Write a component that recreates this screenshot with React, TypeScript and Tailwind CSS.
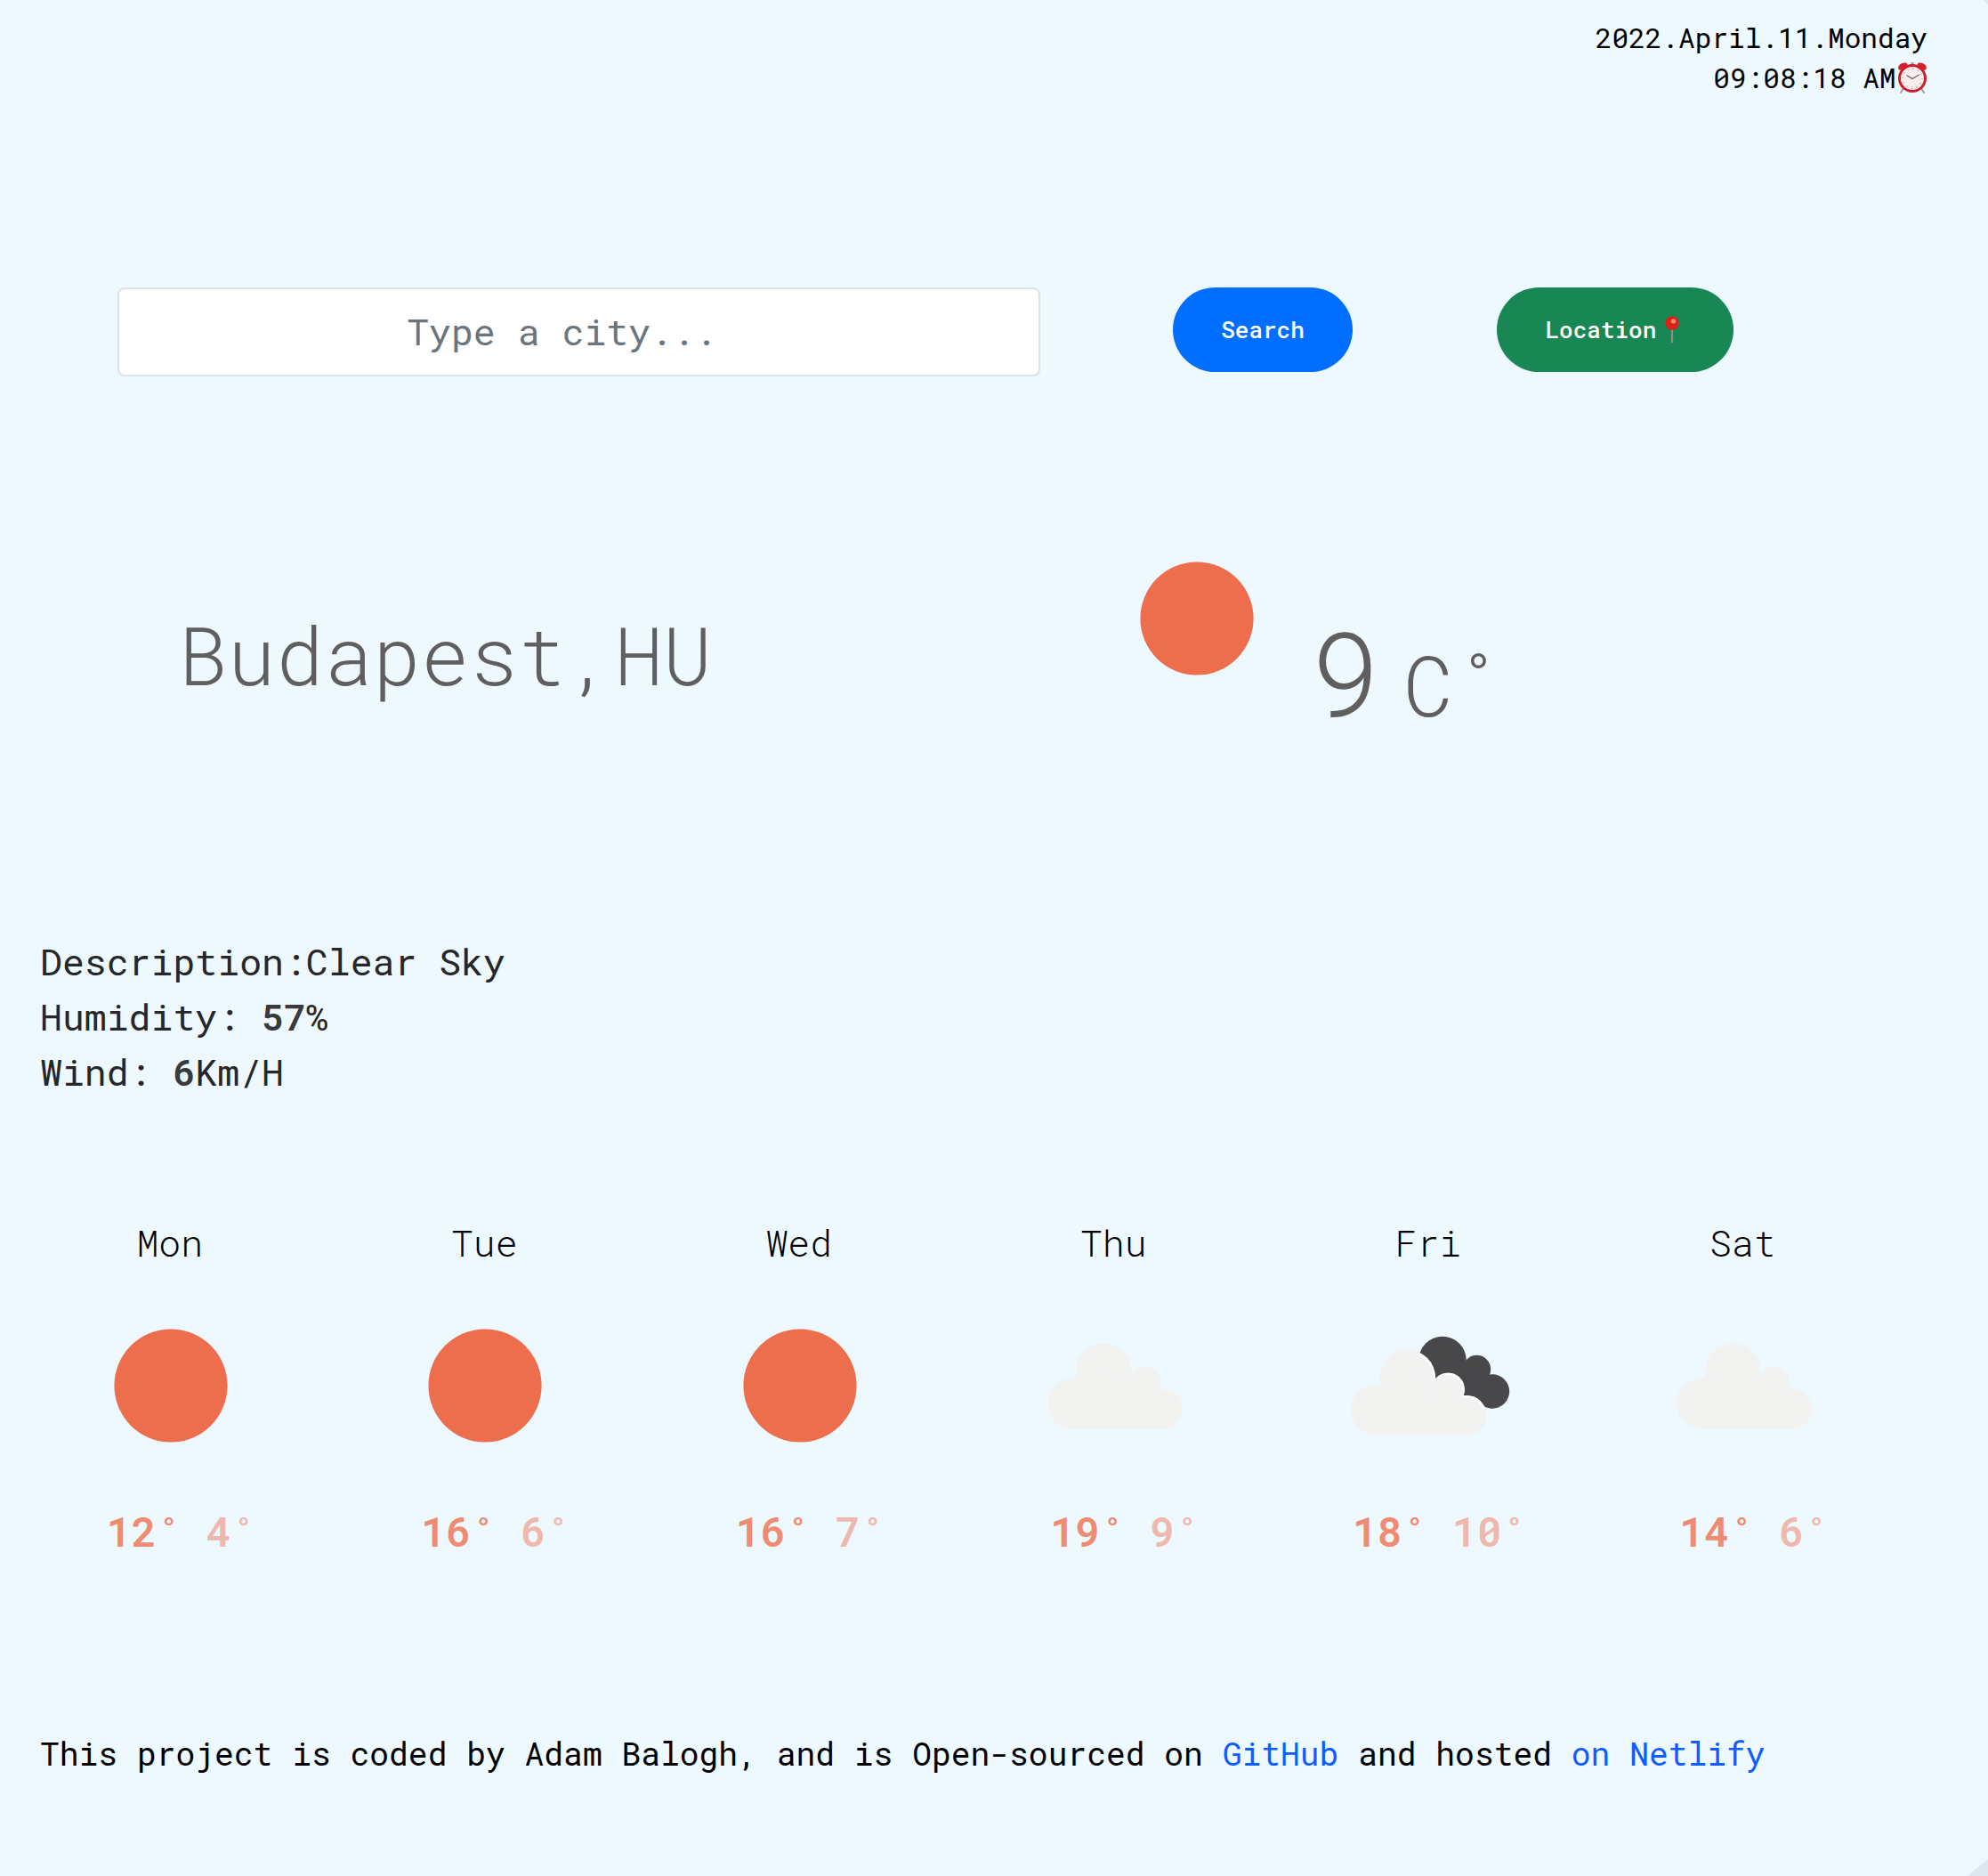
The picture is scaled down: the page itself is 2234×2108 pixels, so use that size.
import React from "react";

type Sky = "clear" | "cloudy" | "broken";

type Day = { name: string; sky: Sky; max: number; min: number };

const days: Day[] = [
  { name: "Mon", sky: "clear", max: 12, min: 4 },
  { name: "Tue", sky: "clear", max: 16, min: 6 },
  { name: "Wed", sky: "clear", max: 16, min: 7 },
  { name: "Thu", sky: "cloudy", max: 19, min: 9 },
  { name: "Fri", sky: "broken", max: 18, min: 10 },
  { name: "Sat", sky: "cloudy", max: 14, min: 6 },
];

function CloudShape() {
  return (
    <>
      <circle cx="88.3" cy="84" r="31.4" />
      <circle cx="134" cy="97" r="18.5" />
      <circle cx="53.7" cy="120" r="28.7" />
      <circle cx="154.5" cy="126.2" r="22.5" />
      <path d="M53.7 92L88 84L134 97L154.5 105V148.7H53.7Z" />
    </>
  );
}

function WeatherIcon({ sky }: { sky: Sky }) {
  return (
    <svg viewBox="0 0 200 200" className="size-[200px] shrink-0">
      {sky === "clear" && <circle cx="100" cy="100" r="63.6" fill="#ec6e4c" />}
      {sky === "cloudy" && (
        <g fill="#f2f2f1">
          <CloudShape />
        </g>
      )}
      {sky === "broken" && (
        <>
          <clipPath id="rear-cloud">
            <circle cx="115" cy="71.4" r="28" />
            <circle cx="153.5" cy="81.5" r="17" />
            <circle cx="171" cy="106.5" r="20" />
            <path d="M90 71H115L153 81L171 106V125H100Z" />
          </clipPath>
          <g fill="#48484a">
            <circle cx="115" cy="71.4" r="26.7" />
            <circle cx="153.5" cy="81.5" r="15.7" />
            <circle cx="171" cy="106.5" r="19.2" />
            <path d="M115 60L153.5 80L171 106V125.7L120 110L100 90Z" />
          </g>
          <g transform="translate(-12.7 7.2)" fill="#f2f2f1">
            <CloudShape />
          </g>
          <g clipPath="url(#rear-cloud)">
            <g transform="translate(-12.7 7.2)" fill="#fff">
              <CloudShape />
            </g>
            <g transform="translate(-14.5 9.2)" fill="#f2f2f1">
              <CloudShape />
            </g>
          </g>
        </>
      )}
    </svg>
  );
}

function AlarmClock() {
  return (
    <svg viewBox="0 0 34 36" className="h-9 w-[34px] shrink-0">
      <path d="M7 30L4 35M27 30L30 35" stroke="#9aa0a6" strokeWidth="2" strokeLinecap="round" />
      <path d="M1.5 9C0 5 4 .8 10 1.6L12 4L4 10Z" fill="#d8202c" />
      <path d="M32.5 9C34 5 30 .8 24 1.6L22 4L30 10Z" fill="#d8202c" />
      <path d="M17 1V4" stroke="#9aa0a6" strokeWidth="3" />
      <circle cx="17" cy="19" r="14.5" fill="#f4eeee" stroke="#c9202b" strokeWidth="3" />
      <circle cx="17" cy="19" r="10.8" fill="none" stroke="#e7a5a5" strokeWidth="2.5" strokeDasharray=".9 4.755" />
      <path d="M10.5 15.5L17 19.5L24.5 15" fill="none" stroke="#66605c" strokeWidth="1.2" />
    </svg>
  );
}

function Pin() {
  return (
    <svg viewBox="0 0 16 31" className="h-[31px] w-4 shrink-0">
      <path d="M8 14V29.5" stroke="#8f8c8b" strokeWidth="2.2" strokeLinecap="round" />
      <circle cx="8" cy="8" r="7.7" fill="#dd2015" />
      <circle cx="9.5" cy="6" r="2.8" fill="#f78273" />
    </svg>
  );
}

export default function App() {
  return (
    <div className="h-[2108px] w-[2234px] overflow-hidden bg-[#dde7ed]">
      <div className="flex h-full flex-col bg-[#edf8ff] font-['Roboto_Mono','DejaVu_Sans_Mono',monospace] text-[#212529] [clip-path:polygon(0_0,2229px_0,100%_5px,100%_2089px,2211px_100%,0_100%)]">
        <header className="flex h-[323px] flex-col items-end pt-[20px] pr-[68px] text-[31.1px] leading-[44.7px] text-black">
          <div>2022.April.11.Monday</div>
          <div className="flex items-center">
            <span>09:08:18 AM</span>
            <span className="flex pl-[1.5px]">
              <AlarmClock />
            </span>
          </div>
        </header>

        <form className="flex h-[100px] items-start pl-[132px]">
          <input
            className="h-[100px] w-[1037px] rounded-lg border-2 border-[#dbe3e8] bg-white pr-[38px] pb-[3px] text-center text-[41.5px] text-[#6c757d] outline-none placeholder:text-[#6c757d] placeholder:opacity-100"
            placeholder="Type a city..."
          />
          <button
            type="button"
            className="ml-[149px] h-[95px] w-[202px] rounded-full bg-[#006fff] text-[26px] font-medium text-white"
          >
            Search
          </button>
          <button
            type="button"
            className="ml-[162px] flex h-[95px] w-[266px] items-center gap-[9.5px] rounded-full bg-[#198754] pl-[54.5px] text-[26px] font-medium text-white"
          >
            <span>Location</span>
            <Pin />
          </button>
        </form>

        <main className="flex h-[627px] flex-col">
          <div className="flex h-[440px] pt-[172px] text-[#5f5f5f]">
            <h1 className="w-[1245px] pt-[85px] pl-[201px] text-[90.7px] leading-[110px] font-[350]">Budapest,HU</h1>
            <WeatherIcon sky="clear" />
            <div className="flex h-[240px] items-baseline pt-[85px] pl-[27.5px] font-[350]">
              <span className="text-[131px] leading-[150px]">9</span>
              <span className="ml-[25.7px] text-[94px] leading-[110px]">C˚</span>
            </div>
          </div>
        </main>

        <section className="h-[270px] pl-[45px] text-[41.5px] leading-[62.2px] text-[#252729]">
          <div className="-mt-[1px]">Description:Clear Sky</div>
          <div>
            Humidity: <strong className="font-semibold text-[#383a3c]">57</strong>%
          </div>
          <div>
            Wind: <strong className="font-semibold text-[#383a3c]">6</strong>Km/H
          </div>
        </section>

        <section className="flex h-[600px] pt-[45px] pl-[15px]">
          {days.map((day) => (
            <div key={day.name} className="flex w-[353.5px] flex-col items-center">
              <div className="pr-0.5 text-[41.5px] leading-[62px] font-[320] text-black">{day.name}</div>
              <div className="pt-[30px]">
                <WeatherIcon sky={day.sky} />
              </div>
              <div className="pt-[27.5px] pl-[24px] text-[46.6px] leading-[70px] font-semibold whitespace-nowrap text-[#ef8b70]">
                {day.max}˚ <span className="text-[#efb8ad]">{day.min}˚</span>
              </div>
            </div>
          ))}
        </section>

        <footer className="pt-[23px] pl-[45px] text-[36.3px] leading-[54px] whitespace-nowrap text-black">
          This project is coded by Adam Balogh, and is Open-sourced on{" "}
          <a className="text-[#0d5efd]">GitHub</a> and hosted <a className="text-[#0d5efd]">on Netlify</a>
        </footer>
      </div>
    </div>
  );
}
